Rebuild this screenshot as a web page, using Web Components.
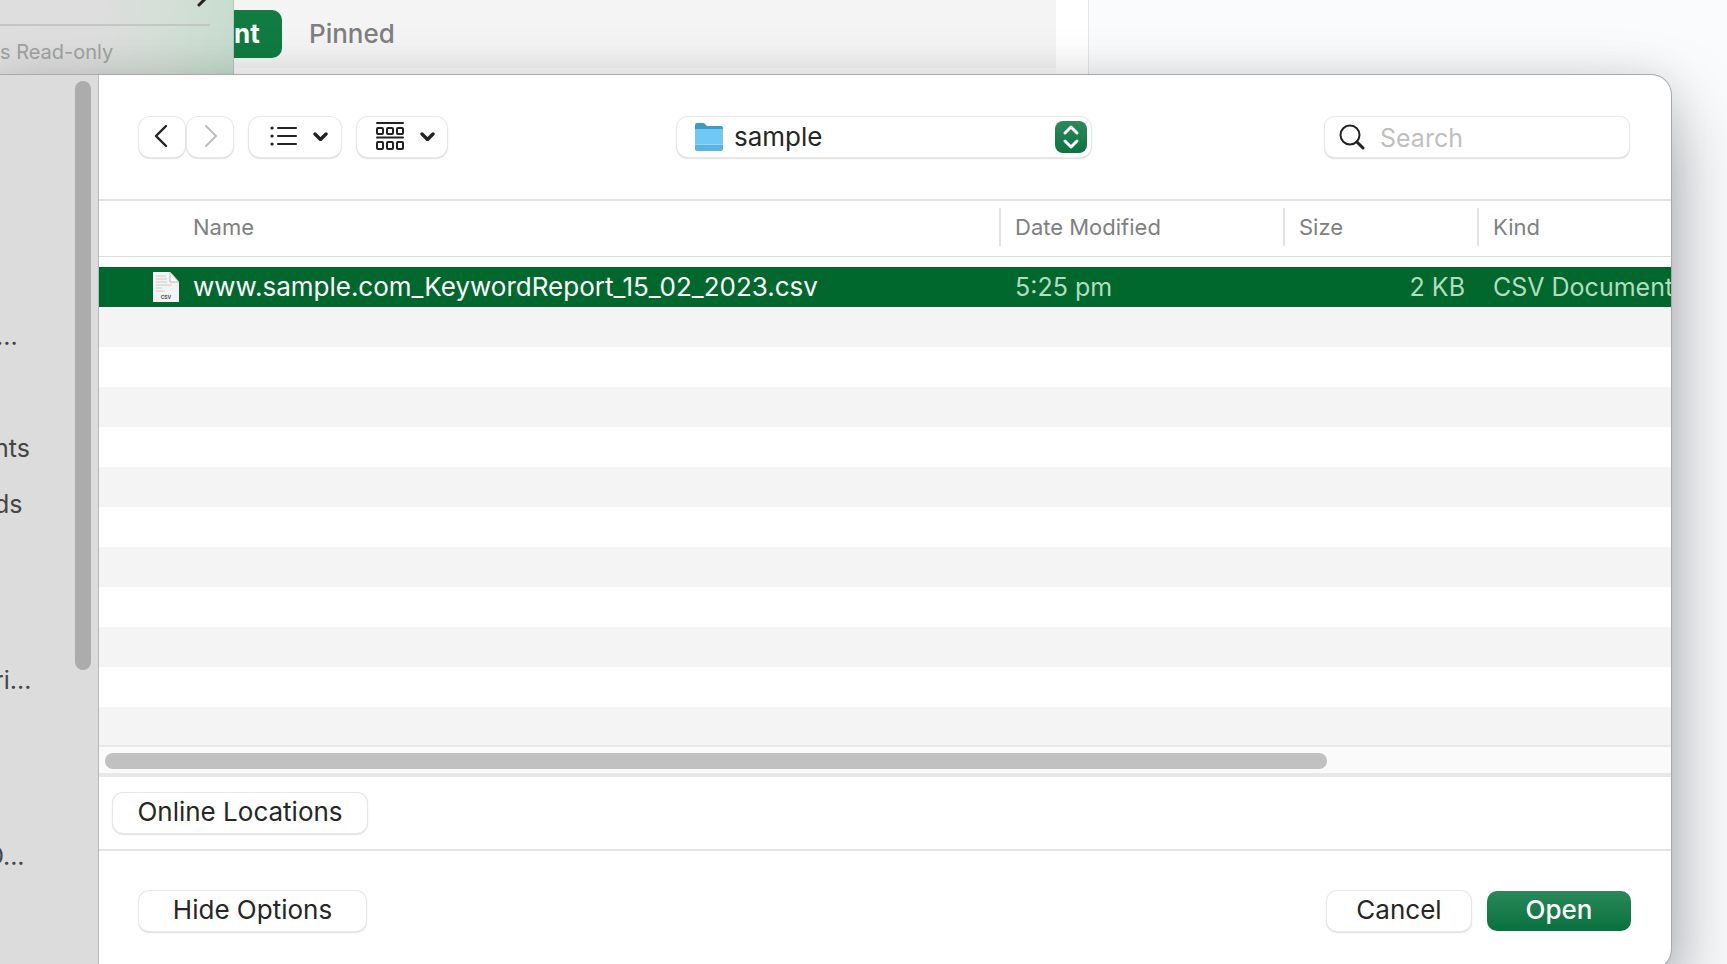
<!DOCTYPE html>
<html lang="en">
<head>
<meta charset="utf-8">
<title>Open</title>
<style>
  html, body {
    height: 100%;
    margin: 0;
  }

  body {
    overflow: hidden;
    font-family: Inter, "Liberation Sans", sans-serif;
    font-size: 26px;
    color: #262626;
    background-color: #f9fbfd;
  }
</style>
</head>
<body>

<start-window></start-window>

<open-dialog>
  <side-bar slot="sidebar"></side-bar>
  <dialog-toolbar slot="toolbar"></dialog-toolbar>
  <file-list slot="files"></file-list>
  <push-button slot="locations" wide>Online Locations</push-button>
  <push-button slot="options" medium>Hide Options</push-button>
  <push-button slot="actions">Cancel</push-button>
  <push-button slot="actions" primary>Open</push-button>
</open-dialog>

<script>
/*
*   Shared base: attaches an open shadow root and fills it from a template
*/

class BaseElement extends HTMLElement {
  constructor () {
    super();
    this.attachShadow({ mode: 'open' });
    const template = document.createElement('template');
    template.innerHTML = this.constructor.markup;
    this.shadowRoot.appendChild(template.content.cloneNode(true));
  }
}

/*
*   start-window: the strip of the application window above the dialog
*/

class StartWindow extends BaseElement {
  static markup = `
<style>
  :host {
    display: flex;
    height: 75px;
    overflow: hidden;
  }

  .window {
    display: flex;
    width: 63%;
    background-color: #fff;
    border-right: 1px solid #e6e7e9;
  }

  .menu {
    box-sizing: border-box;
    width: 234px;
    flex: none;
    overflow: hidden;
    color: #a0a2a1;
    font-size: 20px;
    line-height: 24px;
    background: linear-gradient(100deg, #dedede 40%, #d3dfd6 72%, #c5dccd);
    border-right: 1px solid #b9c6bd;
  }

  .menu svg {
    display: block;
    height: 8px;
    margin-left: 196px;
  }

  .menu hr {
    height: 2px;
    margin: 16px 23px 14px 0;
    border: 0;
    background-color: #c3c7c4;
  }

  .pane {
    display: flex;
    align-items: center;
    flex: 1;
    gap: 27px;
    height: 68px;
    margin-right: 32px;
    background-color: #f4f4f4;
    box-shadow: 0 7px #fafafa;
  }

  button {
    height: 48px;
    padding: 0 0 2px;
    border: 0;
    font: inherit;
    font-weight: 500;
    color: #7f7f7f;
    background: none;
  }

  button[aria-selected="true"] {
    width: 48px;
    text-align: left;
    font-weight: 700;
    color: #fff;
    background-color: #107c41;
    border-radius: 0 10px 10px 0;
  }
</style>
<div class="window">
  <div class="menu">
    <svg width="14" height="8" viewBox="0 0 14 8"><path d="M3 5 L10 -2" fill="none" stroke="#222" stroke-width="3" stroke-linecap="round"/></svg>
    <hr>
    <span>s Read-only</span>
  </div>
  <div class="pane" role="tablist">
    <button role="tab" aria-selected="true">nt</button>
    <button role="tab" aria-selected="false">Pinned</button>
  </div>
</div>
`;
}

/*
*   open-dialog: frame of the dialog, its parts are slotted
*/

class OpenDialog extends BaseElement {
  static markup = `
<style>
  :host {
    position: relative;
    display: flex;
    min-height: calc(100vh - 70px);
    margin-right: 56px;
    background-color: #fff;
    border-radius: 0 20px 20px 0;
    box-shadow: 0 0 0 1px #a9a9ab, 0 0 40px rgba(0, 0, 0, 0.1), 0 40px 80px rgba(0, 0, 10, 0.34);
  }

  main {
    display: flex;
    flex-direction: column;
    flex: 1;
    min-width: 0;
  }

  .locations {
    padding: 16px 14px;
    border-bottom: 2px solid #e3e3e3;
  }

  footer {
    display: flex;
    gap: 16px;
    padding: 40px 40px 38px;
  }

  .options {
    flex: 1;
  }
</style>
<slot name="sidebar"></slot>
<main>
  <slot name="toolbar"></slot>
  <slot name="files"></slot>
  <div class="locations"><slot name="locations"></slot></div>
  <footer>
    <div class="options"><slot name="options"></slot></div>
    <slot name="actions"></slot>
  </footer>
</main>
`;
}

/*
*   side-bar
*/

class SideBar extends BaseElement {
  static markup = `
<style>
  :host {
    display: flex;
    justify-content: space-between;
    box-sizing: border-box;
    width: 99px;
    flex: none;
    overflow: hidden;
    font-size: 25px;
    color: #454545;
    background-color: #dcdcdc;
    border-right: 1px solid #b8b8b8;
  }

  nav {
    display: flex;
    flex-direction: column;
    gap: 120px;
    width: 70px;
    padding-top: 233px;
    overflow: hidden;
  }

  ul {
    margin: 0 0 0 -6px;
    padding: 0;
    list-style: none;
  }

  ul.first {
    margin: 0 0 -64px -4px;
  }

  ul.last {
    margin-left: -14px;
  }

  a {
    display: block;
    line-height: 56px;
    color: inherit;
    text-decoration: none;
    white-space: nowrap;
  }

  .thumb {
    width: 16px;
    height: 589px;
    margin: 6px 7px 0 0;
    border-radius: 8px;
    background-color: #acacac;
  }
</style>
<nav>
  <ul class="first"><li><a href="#">...</a></li></ul>
  <ul>
    <li><a href="#">nts</a></li>
    <li><a href="#">ds</a></li>
  </ul>
  <ul><li><a href="#">ri...</a></li></ul>
  <ul class="last"><li><a href="#">D...</a></li></ul>
</nav>
<div class="thumb"></div>
`;
}

/*
*   dialog-toolbar: history, view options, folder and search
*/

class DialogToolbar extends BaseElement {
  static markup = `
<style>
  :host {
    display: grid;
    grid-template-columns: 1fr 414px 1fr;
    align-items: center;
    height: 124px;
    padding: 0 42px 0 40px;
    border-bottom: 2px solid #e3e3e3;
  }

  .group {
    display: flex;
    gap: 16px;
  }

  .history {
    display: flex;
    gap: 2px;
  }

  button, .folder, .search {
    display: flex;
    align-items: center;
    justify-content: center;
    box-sizing: border-box;
    height: 40px;
    padding: 0;
    border: 0;
    border-radius: 11px;
    background-color: #fff;
    box-shadow: 0 0 0 1px #e8e8e8, 0 1px 2px rgba(0, 0, 0, 0.4);
  }

  .history button {
    width: 46px;
    padding: 0 2px 2px 0;
  }

  .history button + button {
    padding: 0 0 2px 2px;
  }

  .view {
    gap: 16px;
    width: 92px;
    padding: 0 0 2px 8px;
  }

  .arrange {
    gap: 16px;
    width: 90px;
    padding: 0 0 2px 6px;
  }

  svg {
    display: block;
    flex: none;
    fill: none;
    stroke: #222;
    stroke-width: 2;
    stroke-linecap: round;
    stroke-linejoin: round;
  }

  .folder {
    padding: 0 4px 0 17px;
  }

  select {
    flex: 1;
    height: 40px;
    padding: 0 0 2px 10px;
    border: 0;
    outline: 0;
    appearance: none;
    font: inherit;
    color: #262626;
    background: none;
  }

  .search {
    justify-self: end;
    gap: 15px;
    width: 304px;
    padding: 0 14px;
    border-radius: 9px;
  }

  input {
    flex: 1;
    min-width: 0;
    padding: 2px 0 0;
    border: 0;
    outline: 0;
    font: inherit;
    font-size: 25px;
    background: none;
  }

  input::placeholder {
    color: #bfbfbf;
  }
</style>
<div class="group">
  <div class="history">
    <button aria-label="Back"><svg width="14" height="24" viewBox="0 0 14 24"><path d="M12 2 L2 12 L12 22" stroke-width="2.4"/></svg></button>
    <button aria-label="Forward"><svg width="14" height="24" viewBox="0 0 14 24"><path d="M2 2 L12 12 L2 22" stroke="#bdbdbd"/></svg></button>
  </div>
  <button class="view" aria-label="View">
    <svg width="27" height="20" viewBox="0 0 27 20">
      <path d="M8 2 H26 M8 10 H26 M8 18 H26"/>
      <path d="M2 2 h.1 M2 10 h.1 M2 18 h.1" stroke-width="3.2"/>
    </svg>
    <svg width="15" height="10" viewBox="0 0 15 10"><path d="M2 3 L7.500 8.500 L13 3" stroke-width="3.4"/></svg>
  </button>
  <button class="arrange" aria-label="Group">
    <svg width="28" height="28" viewBox="0 0 28 28">
      <path d="M1 1 H27 M1 15.500 H27"/>
      <rect x="1" y="6" width="6" height="6" rx="1"/>
      <rect x="11" y="6" width="6" height="6" rx="1"/>
      <rect x="21" y="6" width="6" height="6" rx="1"/>
      <rect x="1" y="20" width="6" height="7" rx="1"/>
      <rect x="11" y="20" width="6" height="7" rx="1"/>
      <rect x="21" y="20" width="6" height="7" rx="1"/>
    </svg>
    <svg width="15" height="10" viewBox="0 0 15 10"><path d="M2 3 L7.500 8.500 L13 3" stroke-width="3.4"/></svg>
  </button>
</div>
<div class="folder">
  <svg width="30" height="28" viewBox="0 0 30 28" style="stroke: none">
    <path d="M1 2 Q1 0 3 0 H10 L13 3 H27 Q29 3 29 5 V14 H1 Z" fill="#3a9ccb"/>
    <path d="M1 6 H29 V26 Q29 27 27 27 H3 Q1 27 1 26 Z" fill="#70c8f4"/>
    <path d="M1 22 H29 V26 Q29 28 27 28 H3 Q1 28 1 26 Z" fill="#5eb2df"/>
    <path d="M1 21 H29 V22 H1 Z" fill="#8ed5f7"/>
  </svg>
  <select aria-label="Folder"><option>sample</option></select>
  <svg width="32" height="32" viewBox="0 0 32 32" style="stroke: none">
    <defs><linearGradient id="green" x2="0" y2="1"><stop stop-color="#2c8a5a"/><stop offset="1" stop-color="#0b7340"/></linearGradient></defs>
    <rect width="32" height="32" rx="8" fill="url(#green)"/>
    <path d="M10 12 L16 6 L22 12 M10 20 L16 26 L22 20" stroke="#fff" stroke-width="3"/>
  </svg>
</div>
<label class="search">
  <svg width="26" height="26" viewBox="0 0 26 26"><circle cx="11" cy="11" r="9.500"/><path d="M18 18 L24 24" stroke-width="3"/></svg>
  <input type="text" placeholder="Search" aria-label="Search">
</label>
`;
}

/*
*   file-list: table of files with striped filler and scrollbar
*/

class FileList extends BaseElement {
  static markup = `
<style>
  :host {
    display: flex;
    flex-direction: column;
    flex: 1;
  }

  table {
    width: 100%;
    table-layout: fixed;
    border-collapse: collapse;
  }

  th, td {
    padding: 0;
    text-align: left;
    white-space: nowrap;
    overflow: hidden;
  }

  th {
    box-sizing: border-box;
    height: 55px;
    padding-bottom: 2px;
    font-size: 22px;
    font-weight: 400;
    color: #808080;
    border-bottom: 1px solid #dcdcdc;
  }

  th span {
    display: block;
    padding-left: 14px;
    line-height: 38px;
    border-left: 2px solid #e3e3e3;
  }

  th:first-child span {
    padding-left: 94px;
    border-left: 0;
  }

  .space td {
    height: 10px;
  }

  .file td {
    height: 40px;
    padding-left: 16px;
    font-size: 25px;
    color: #b4dcc0;
    background-color: #00682c;
  }

  .file td.name {
    padding-left: 54px;
    font-size: 26px;
    color: #fff;
  }

  .file td.size {
    padding-right: 12px;
    text-align: right;
  }

  .name div {
    display: flex;
    align-items: center;
    gap: 14px;
  }

  th.date { width: 284px; }
  th.size, th.kind { width: 194px; }

  .rows {
    flex: 1;
    background: repeating-linear-gradient(#f4f4f4 0 40px, #fff 40px 80px);
  }

  .track {
    height: 26px;
    border-top: 2px solid #e8e8e8;
    border-bottom: 4px solid #e8e8e8;
    background-color: #fafafa;
  }

  .thumb {
    width: calc(78% - 4px);
    height: 16px;
    margin: 6px;
    border-radius: 8px;
    background-color: #c1c1c1;
  }

  svg {
    display: block;
    flex: none;
  }
</style>
<table>
  <thead>
    <tr>
      <th><span>Name</span></th>
      <th class="date"><span>Date Modified</span></th>
      <th class="size"><span>Size</span></th>
      <th class="kind"><span>Kind</span></th>
    </tr>
  </thead>
  <tbody>
    <tr class="space"><td colspan="4"></td></tr>
    <tr class="file">
      <td class="name"><div>
        <svg width="26" height="30" viewBox="0 0 26 30">
          <path d="M0 0 H17 L26 10 V30 H0 Z" fill="#f3f3f3"/>
          <path d="M17 0 L26 10 H17 Z" fill="#fff" stroke="#b5b5b5" stroke-width="1"/>
          <path d="M3 4 H13 M3 7 H14 M3 10 H14 M3 13 H19 M3 16 H9 M3 19 H12" stroke="#cccccc" stroke-width="1"/>
          <text x="13" y="27" text-anchor="middle" font-size="5" font-weight="700" fill="#555">CSV</text>
        </svg>
        <span>www.sample.com_KeywordReport_15_02_2023.csv</span>
      </div></td>
      <td>5:25 pm</td>
      <td class="size">2 KB</td>
      <td>CSV Document</td>
    </tr>
  </tbody>
</table>
<div class="rows"></div>
<div class="track"><div class="thumb"></div></div>
`;
}

/*
*   push-button
*/

class PushButton extends BaseElement {
  static markup = `
<style>
  :host {
    display: block;
    width: 144px;
  }

  :host([wide]) {
    width: 254px;
  }

  :host([medium]) {
    width: 227px;
  }

  button {
    display: block;
    width: 100%;
    height: 40px;
    padding: 0 0 3px;
    border: 0;
    border-radius: 10px;
    font: inherit;
    color: #262626;
    background-color: #fff;
    box-shadow: 0 0 0 1px #e8e8e8, 0 1px 2px rgba(0, 0, 0, 0.4);
  }

  :host([primary]) button {
    font-weight: 500;
    color: #fff;
    background: linear-gradient(#2a8858, #08713d);
    box-shadow: none;
  }
</style>
<button><slot></slot></button>
`;
}

customElements.define('push-button', PushButton);
customElements.define('file-list', FileList);
customElements.define('dialog-toolbar', DialogToolbar);
customElements.define('side-bar', SideBar);
customElements.define('open-dialog', OpenDialog);
customElements.define('start-window', StartWindow);
</script>
</body>
</html>
